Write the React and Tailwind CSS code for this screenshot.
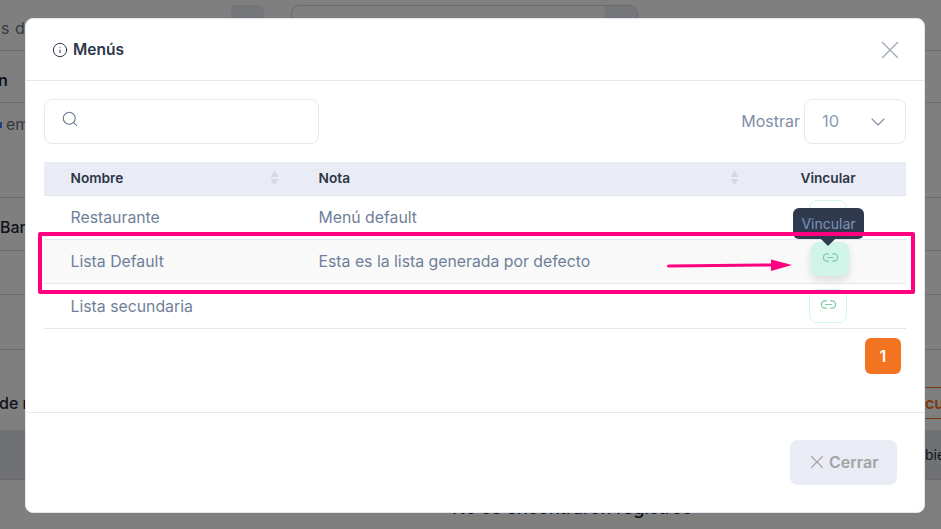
import { Info, X, Search, ChevronDown, Link2 } from 'lucide-react';

const menus = [
    { name: 'Restaurante', note: 'Menú default', height: 'h-[44px]' },
    { name: 'Lista Default', note: 'Esta es la lista generada por defecto', height: 'h-[44px]', active: true },
    { name: 'Lista secundaria', note: '', height: 'h-[45px]' },
];

function SortIcon() {
    return (
        <svg width="9" height="16" viewBox="0 0 9 16" className="shrink-0">
            <path d="M4.5 0.5 L8.5 7 L0.5 7 Z" fill="#d5d9e3" />
            <path d="M4.5 15.5 L8.5 9 L0.5 9 Z" fill="#d5d9e3" />
        </svg>
    );
}

// The page behind the dialog, only its edges are visible
function BackgroundPage() {
    return (
        <div className="h-[529px] overflow-hidden bg-white text-[16px] text-[#1f2937]">
            <div className="h-[51px] border-b border-[#d4d4d8] pt-[5px] flex">
                <div className="w-[264px] h-[46px] flex justify-between">
                    <span className="ml-[1px] pt-[11px] text-[#6b7280] tracking-[0.5px]">s de</span>
                    <div className="w-[33px] bg-[#e9ecf4] rounded-tr-lg"></div>
                </div>
                <div className="ml-[27px] w-[347px] h-[46px] border border-[#d4d4d8] rounded-tl-lg rounded-tr-lg flex justify-end">
                    <div className="w-[32px] bg-[#e9ecf4] rounded-tr-lg"></div>
                </div>
            </div>
            <div className="h-[52px] border-b border-[#d4d4d8] flex items-center pt-[6px] font-semibold">
                <span className="ml-[-2px]">n</span>
            </div>
            <div className="h-[95px] border-b border-[#d4d4d8] pt-[9px] text-[#6b7280] flex items-start">
                <div className="w-[2px] h-[6px] mt-[10px] bg-[#3b82f6]"></div>
                <span className="ml-[4px]">em</span>
            </div>
            <div className="h-[53px] border-b border-[#d4d4d8] flex items-center pt-[6px] font-medium">
                <span>Bar</span>
            </div>
            <div className="h-[44px] border-b border-[#d4d4d8]"></div>
            <div className="h-[55px] border-b border-[#d4d4d8]"></div>
            <div className="h-[80px] relative">
                <div className="pt-[41px] font-medium">
                    <span className="ml-[-1px]">de r</span>
                </div>
                <div className="absolute left-[920px] top-[37px] w-[60px] h-[32px] border-y border-[#f47321] text-[#f47321] font-semibold flex items-center pl-[5px]">
                    cu
                </div>
            </div>
            <div className="h-[50px] bg-[#e0e3eb] border-b border-[#d4d4d8] flex items-center justify-end text-[14px]">
                <span className="w-[16px] overflow-hidden">bie</span>
            </div>
            <div className="text-center pl-[203px] pt-[14px] text-[18px] font-medium">No se encontraron registros</div>
        </div>
    );
}

function MenusDialog() {
    return (
        <div className="absolute left-[25px] top-[18px] w-[900px] h-[495px] bg-white rounded-lg border border-[#e2e8f0] flex flex-col">
            <div className="h-[62px] shrink-0 border-b border-[#e2e8f0] flex items-center justify-between pl-[26px] pr-[19.5px]">
                <div className="flex items-center gap-[5px] text-[#2d3748]">
                    <Info size={16} strokeWidth={1.5} />
                    <h2 className="text-[15.5px] font-semibold pt-[1px]">Menús</h2>
                </div>
                <X size={30} strokeWidth={1.1} className="text-[#a1a9b8]" />
            </div>

            <div className="flex-1 px-[18px] pt-[18px]">
                <div className="flex items-center justify-between">
                    <div className="w-[275px] h-[45px] border border-[#e6e8ef] rounded-lg flex items-center pl-[16px]">
                        <Search size={18} strokeWidth={1.4} className="text-[#64748b] -mt-[5px]" />
                    </div>
                    <div className="flex items-center gap-[4px]">
                        <span className="text-[16px] text-[#7e8da6] pb-[2px]">Mostrar</span>
                        <div className="w-[102px] h-[45px] border border-[#e6e8ef] rounded-lg flex items-center justify-between pl-[17px] pr-[15px] text-[16.5px] text-[#8d9bb3]">
                            <span className="pb-[1px]">10</span>
                            <ChevronDown size={24} strokeWidth={1.1} className="text-[#7e8da6]" />
                        </div>
                    </div>
                </div>

                <table className="w-[862px] mt-[18px] table-fixed border-collapse">
                    <colgroup>
                        <col className="w-[248px]" />
                        <col className="w-[458px]" />
                        <col className="w-[156px]" />
                    </colgroup>
                    <thead>
                        <tr className="h-[33px] bg-[#e9ecf4] border-b border-[#dfe3ea] text-[13.7px] font-semibold text-[#2d3748]">
                            <th className="pl-[26.5px] pr-[13px] text-left font-semibold">
                                <div className="flex items-center justify-between">Nombre <SortIcon /></div>
                            </th>
                            <th className="pl-[26.5px] pr-[11px] text-left font-semibold">
                                <div className="flex items-center justify-between">Nota <SortIcon /></div>
                            </th>
                            <th className="text-center font-semibold">Vincular</th>
                        </tr>
                    </thead>
                    <tbody>
                        {menus.map((menu) => (
                            <tr
                                key={menu.name}
                                className={`${menu.height} border-b border-[#e2e8f0] text-[15.8px] text-[#6f7f99] ${menu.active ? 'bg-[#f9f9fa]' : ''}`}
                            >
                                <td className="pl-[26.5px] pt-[2px]">{menu.name}</td>
                                <td className="pl-[26.5px] pt-[2px]">{menu.note}</td>
                                <td>
                                    <div className="flex justify-center">
                                        {menu.active ? (
                                            <div className="w-[38px] h-[34px] translate-x-[2px] -translate-y-[2px] rounded-lg bg-[#d1f4e8] shadow-[0_4px_8px_rgba(0,0,0,0.12)] flex items-center justify-center pb-[3px]">
                                                <Link2 size={17} strokeWidth={1.7} className="text-[#7cc8a0]" />
                                            </div>
                                        ) : (
                                            <div className="w-[38px] h-[34px] rounded-lg border border-[#d1f4e8] flex items-center justify-center pb-[3px]">
                                                <Link2 size={17} strokeWidth={1.7} className="text-[#7cc8a0]" />
                                            </div>
                                        )}
                                    </div>
                                </td>
                            </tr>
                        ))}
                    </tbody>
                </table>

                <div className="flex justify-end mt-[9px] pr-[5px]">
                    <div className="w-[36px] h-[36px] rounded-md bg-[#f47321] text-white text-[16px] font-semibold flex items-center justify-center">1</div>
                </div>
            </div>

            <div className="h-[100px] shrink-0 border-t border-[#e2e8f0] flex justify-end pt-[27px] pr-[27px]">
                <button className="w-[107px] h-[45px] rounded-lg bg-[#e9ecf4] text-[#a3a3a3] text-[16px] font-semibold flex items-center pl-[15.5px] pb-[1px] gap-[1.5px]">
                    <X size={22} strokeWidth={1.2} />
                    Cerrar
                </button>
            </div>
        </div>
    );
}

export default function App() {
    return (
        <div className="relative h-[529px] w-[941px] overflow-hidden font-['Inter',sans-serif]">
            <BackgroundPage />
            <div className="absolute inset-0 bg-black/50"></div>
            <MenusDialog />

            {/* tooltip on the hovered button */}
            <div className="absolute left-[793px] top-[208px] w-[71px] h-[31px] rounded-md bg-[#2f3a4f] text-[#7d93b5] text-[14px] flex items-center justify-center">
                Vincular
                <div className="absolute left-[30px] bottom-[-5px] w-[10px] h-[10px] rotate-45 bg-[#2f3a4f]"></div>
            </div>

            {/* annotation drawn over the screenshot */}
            <div className="absolute left-[38px] top-[232px] w-[877px] h-[62px] border-[4px] border-[#ff0080] rounded-[2px]"></div>
            <svg className="absolute left-[660px] top-[251px]" width="140" height="30" viewBox="0 0 140 30">
                <path d="M8.5 15 L112 14" stroke="#ff0080" strokeWidth="3" strokeLinecap="round" fill="none" />
                <path d="M111 8.5 L132 14 L111 20 Z" fill="#ff0080" />
            </svg>
        </div>
    );
}
